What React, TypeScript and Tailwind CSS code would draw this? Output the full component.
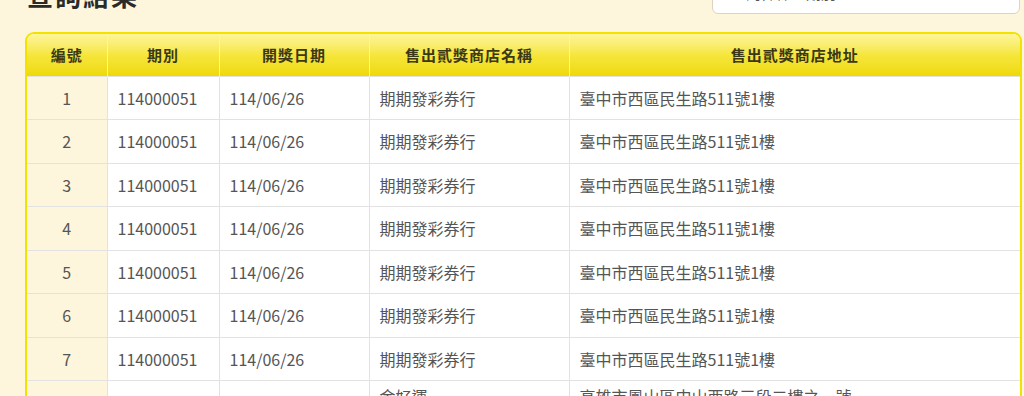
const rows = [
  { no: 1, term: "114000051", date: "114/06/26", shop: "期期發彩券行", addr: "臺中市西區民生路511號1樓" },
  { no: 2, term: "114000051", date: "114/06/26", shop: "期期發彩券行", addr: "臺中市西區民生路511號1樓" },
  { no: 3, term: "114000051", date: "114/06/26", shop: "期期發彩券行", addr: "臺中市西區民生路511號1樓" },
  { no: 4, term: "114000051", date: "114/06/26", shop: "期期發彩券行", addr: "臺中市西區民生路511號1樓" },
  { no: 5, term: "114000051", date: "114/06/26", shop: "期期發彩券行", addr: "臺中市西區民生路511號1樓" },
  { no: 6, term: "114000051", date: "114/06/26", shop: "期期發彩券行", addr: "臺中市西區民生路511號1樓" },
  { no: 7, term: "114000051", date: "114/06/26", shop: "期期發彩券行", addr: "臺中市西區民生路511號1樓" },
  {
    no: 8,
    term: "114000051",
    date: "114/06/26",
    shop: "金好運\n彩券行",
    addr: "高雄市鳳山區中山西路三段二樓之一號\n（五甲郵局對面）",
  },
];

const headers = ["編號", "期別", "開獎日期", "售出貳獎商店名稱", "售出貳獎商店地址"];
const widths = ["w-[80px]", "w-[112px]", "w-[150px]", "w-[200px]", ""];

function App() {
  return (
    <div
      className="w-[1024px] h-[396px] overflow-hidden bg-[#fdf6dc] pl-[25px] pr-[2px]"
      style={{ fontFamily: '"Noto Sans CJK TC", "Noto Sans", sans-serif' }}
    >
      {/* title + search summary */}
      <div className="flex items-end justify-between h-[20px] -mt-[6px]">
        <h2 className="text-[26px] leading-[34px] font-bold text-[#2a2a2a] tracking-[2px] ml-[2px] mb-[2px]">查詢結果</h2>
        <div className="w-[308px] h-[40px] mr-[2px] bg-white border border-[#ddd3bf] rounded-md flex items-end px-[18px] pb-[9px] text-[15px] text-[#555] whitespace-nowrap">
          查詢條件：期別 114000051 ～ 114000051
        </div>
      </div>

      {/* results table */}
      <div className="mt-[18px] border-2 border-[#f2e200] rounded-t-[9px] overflow-hidden bg-white">
        <table className="w-full border-collapse text-[16px] text-[#555]">
          <thead>
            <tr className="h-[42px] bg-gradient-to-b from-[#fdf597] via-[#f6e63a] to-[#efd900]">
              {headers.map((h, i) => (
                <th
                  key={h}
                  className={`text-[15px] font-bold text-[#3b3817] tracking-[1px] text-center ${
                    i < headers.length - 1 ? "border-r border-[#fbf4b0]" : ""
                  } ${widths[i]}`}
                >
                  {h}
                </th>
              ))}
            </tr>
          </thead>
          <tbody>
            {rows.map((r) => (
              <tr key={r.no} className="h-[43.5px] border-t border-[#e2e2e2] leading-[24px]">
                <td className="bg-[#fdf6dc] text-center border-r border-[#e6e2d6]">{r.no}</td>
                <td className="px-[10px] border-r border-[#e2e2e2]">{r.term}</td>
                <td className="px-[10px] border-r border-[#e2e2e2]">{r.date}</td>
                <td className="px-[10px] py-[3px] border-r border-[#e2e2e2] whitespace-pre-line">{r.shop}</td>
                <td className="px-[10px] py-[3px] whitespace-pre-line">{r.addr}</td>
              </tr>
            ))}
          </tbody>
        </table>
      </div>
    </div>
  );
}

export default App;
